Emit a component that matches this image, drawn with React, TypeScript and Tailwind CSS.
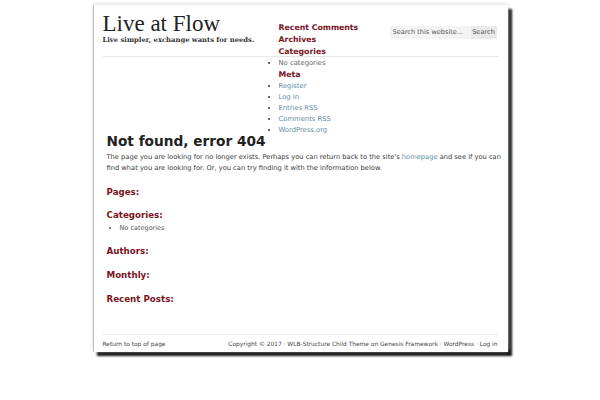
export default function App() {
  const sans = { fontFamily: '"DejaVu Sans", Verdana, sans-serif' };
  const red = "text-[#7a1222]";
  const metaLinks = ["Register", "Log in", "Entries RSS", "Comments RSS", "WordPress.org"];
  return (
    <div className="min-h-[400px] bg-white pt-[5px]" style={sans}>
      <div className="mx-auto flex h-[347px] w-[415px] flex-col border-l border-l-[#bbb] bg-white pl-[9px] pr-[10px] shadow-[0_-1px_4px_#ddd,4px_4px_2px_#111]">
        {/* header */}
        <div className="grid grid-cols-[176px_111px_1fr] grid-rows-[52px_auto]">
          <div className="col-span-3 col-start-1 row-start-1 border-b border-[#e6e6e6]" />
          <div className="col-start-1 row-start-1 pt-[6px]">
            <div className="text-[23px] leading-[25px] text-[#222]" style={{ fontFamily: '"Liberation Serif", serif' }}>
              Live at Flow
            </div>
            <div className="-mt-[1px] text-[6.8px] font-bold text-[#333]" style={{ fontFamily: '"DejaVu Serif", serif' }}>
              Live simpler, exchange wants for needs.
            </div>
          </div>
          <div className="col-start-2 row-span-2 row-start-1 z-10 pt-[17px] text-[6.8px] leading-[11px]">
            <div className={`text-[7.8px] font-bold leading-[12px] ${red}`}>Recent Comments</div>
            <div className={`text-[7.8px] font-bold leading-[12px] ${red}`}>Archives</div>
            <div className={`text-[7.8px] font-bold leading-[12px] ${red}`}>Categories</div>
            <ul className="list-disc pl-0 text-[#666] marker:text-[#333]">
              <li>No categories</li>
            </ul>
            <div className={`text-[7.8px] font-bold leading-[12px] ${red}`}>Meta</div>
            <ul className="list-disc pl-0 text-[#5d8ea3] marker:text-[#333]">
              {metaLinks.map((l) => (
                <li key={l}>{l}</li>
              ))}
            </ul>
          </div>
          <div className="col-start-3 row-start-1 flex pt-[21px] pr-[1px]">
            <div className="flex h-[13px] w-[81px] items-center bg-[#f3f3f3] pl-[3px] text-[6.6px] text-[#555]">
              Search this website...
            </div>
            <div className="flex h-[13px] flex-1 items-center justify-center bg-[#e9e9e9] text-[6.6px] text-[#555]">
              Search
            </div>
          </div>
        </div>

        {/* content */}
        <div className="-mr-[6px] -mt-[3px] flex-1 pl-[4px]">
          <h1 className="text-[13.7px] font-bold leading-[16px] text-[#222]">Not found, error 404</h1>
          <p className="mt-[3px] text-[6.7px] leading-[11px] text-[#3a3a3a]">
            The page you are looking for no longer exists. Perhaps you can return back to the site's{" "}
            <a className="text-[#5d8ea3]">homepage</a> and see if you can find what you are looking for. Or, you can
            try finding it with the information below.
          </p>
          <h4 className={`mt-[12px] text-[8.7px] font-bold leading-[12px] ${red}`}>Pages:</h4>
          <h4 className={`mt-[11px] text-[8.7px] font-bold leading-[12px] ${red}`}>Categories:</h4>
          <ul className="list-disc pl-[13px] pt-[2px] text-[6.5px] leading-[11px] text-[#555]">
            <li>No categories</li>
          </ul>
          <h4 className={`mt-[11px] text-[8.7px] font-bold leading-[12px] ${red}`}>Authors:</h4>
          <h4 className={`mt-[12px] text-[8.7px] font-bold leading-[12px] ${red}`}>Monthly:</h4>
          <h4 className={`mt-[12px] text-[8.7px] font-bold leading-[12px] ${red}`}>Recent Posts:</h4>
        </div>

        {/* footer */}
        <div className="mb-[3px] flex items-center justify-between border-t border-[#eaeaea] pt-[5px] text-[5.9px] leading-[9px] text-[#444]">
          <span>Return to top of page</span>
          <span>Copyright © 2017 · WLB-Structure Child Theme on Genesis Framework · WordPress · Log in</span>
        </div>
      </div>
    </div>
  );
}
